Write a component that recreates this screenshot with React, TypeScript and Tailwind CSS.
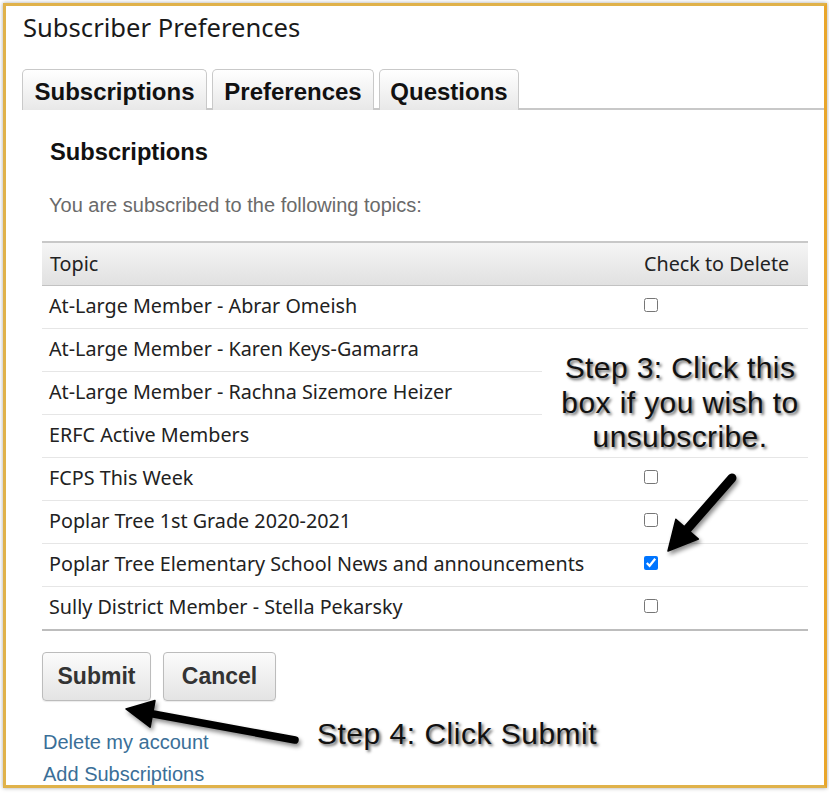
import React from 'react';

type Topic = { name: string; checked: boolean };

const topics: Topic[] = [
  { name: 'At-Large Member - Abrar Omeish', checked: false },
  { name: 'At-Large Member - Karen Keys-Gamarra', checked: false },
  { name: 'At-Large Member - Rachna Sizemore Heizer', checked: false },
  { name: 'ERFC Active Members', checked: false },
  { name: 'FCPS This Week', checked: false },
  { name: 'Poplar Tree 1st Grade 2020-2021', checked: false },
  { name: 'Poplar Tree Elementary School News and announcements', checked: true },
  { name: 'Sully District Member - Stella Pekarsky', checked: false },
];

const tabs = [
  { label: 'Subscriptions', w: 'w-[185px]' },
  { label: 'Preferences', w: 'w-[162px]' },
  { label: 'Questions', w: 'w-[140px]' },
];

// callout arrow: shaft + triangular head, coords in page space
const Arrow: React.FC<{ tail: [number, number]; tip: [number, number]; stroke: number; head: number; half: number }> = ({ tail, tip, stroke, head, half }) => {
  const dx = tip[0] - tail[0];
  const dy = tip[1] - tail[1];
  const len = Math.hypot(dx, dy);
  const ux = dx / len;
  const uy = dy / len;
  const bx = tip[0] - ux * head;
  const by = tip[1] - uy * head;
  const px = -uy * half;
  const py = ux * half;
  const pts = `${tip[0]},${tip[1]} ${bx + px},${by + py} ${bx - px},${by - py}`;
  return (
    <g>
      <line x1={tail[0]} y1={tail[1]} x2={bx + ux * 2} y2={by + uy * 2} stroke="#000" strokeWidth={stroke} strokeLinecap="round" />
      <polygon points={pts} fill="#000" stroke="#000" strokeWidth={1.5} strokeLinejoin="round" />
    </g>
  );
};

const App: React.FC = () => {
  return (
    <div className="relative w-[829px] h-[795px] bg-white overflow-hidden">
      <div className="ml-[3px] mt-[3px] w-[824px] h-[785px] border-[3px] border-[#e0b24a] border-r-[#e9a62b] shadow-[0_0_4px_rgba(0,0,0,0.35)] overflow-hidden bg-white">
        <h1 className="pl-[17px] pt-[7px] text-[25.6px] leading-[30px] text-[#1a1a1a] font-['Noto_Sans','Open_Sans',sans-serif]">
          Subscriber Preferences
        </h1>

        {/* Tabs */}
        <div className="ml-[16px] mt-[26px] h-[41px] flex items-end gap-[5px] border-b-2 border-[#c8c8c8]">
          {tabs.map(t => (
            <div
              key={t.label}
              className={`${t.w} -mb-[2px] h-[41px] pt-[2px] text-center leading-[39px] text-[24px] font-bold text-[#111] font-['Liberation_Sans',Arial,sans-serif] rounded-t-[5px] border border-b-0 border-[#c9c9c9] bg-gradient-to-b from-white to-[#e8e8e8]`}
            >
              {t.label}
            </div>
          ))}
        </div>

        {/* Panel */}
        <div className="pl-[36px] pr-[16px] font-['Liberation_Sans',Arial,sans-serif]">
          <h2 className="mt-[28px] pl-[8px] text-[23.7px] leading-[28px] font-bold text-[#111]">Subscriptions</h2>
          <p className="mt-[27px] pl-[7px] text-[20px] leading-[24px] text-[#6a6a6a]">You are subscribed to the following topics:</p>

          <div className="relative mt-[24px] w-[766px] font-['Noto_Sans','Open_Sans',sans-serif] text-[#222] text-[19.75px]">
            <div className="flex h-[45px] border-t-2 border-b border-t-[#c8c8c8] border-b-[#c2c2c2] bg-gradient-to-b from-[#f5f5f5] to-[#e1e1e1] leading-[42px]">
              <div className="flex-1 pl-[8px] pb-[3px]">Topic</div>
              <div className="w-[172px] pl-[8px] pb-[3px]">Check to Delete</div>
            </div>
            {topics.map((t, i) => {
              const last = i === topics.length - 1;
              return (
                <div
                  key={t.name}
                  className={last ? 'flex items-center h-[44px] border-b-2 border-[#bdbdbd]' : 'flex items-center h-[43px] border-b border-[#e6e6e6]'}
                >
                  <div className="flex-1 pl-[7px] pb-[2px] leading-[40px]">{t.name}</div>
                  <div className="w-[172px] pl-[8px] flex items-center">
                    <input type="checkbox" defaultChecked={t.checked} className="m-0 mb-[4px] w-[14px] h-[14px]" />
                  </div>
                </div>
              );
            })}

            {/* Step 3 callout */}
            <div className="absolute left-[500px] top-[91px] w-[276px] h-[124px] bg-white pt-[19px] text-center text-[30px] tracking-[0.4px] leading-[34.5px] text-[#111] font-['Liberation_Sans',Arial,sans-serif] [text-shadow:2px_2px_3px_rgba(0,0,0,0.6)]">
              Step 3: Click this
              <br />
              box if you wish to
              <br />
              unsubscribe.
            </div>
          </div>

          <div className="mt-[21px] flex gap-[12px]">
            <button className="w-[109px] h-[49px] rounded-[4px] border border-[#bcbcbc] bg-gradient-to-b from-[#fbfbfb] to-[#e4e4e4] text-[23px] font-bold text-[#333] shadow-[0_1px_1px_rgba(0,0,0,0.08)]">
              Submit
            </button>
            <button className="w-[113px] h-[49px] rounded-[4px] border border-[#bcbcbc] bg-gradient-to-b from-[#fbfbfb] to-[#e4e4e4] text-[23px] font-bold text-[#333] shadow-[0_1px_1px_rgba(0,0,0,0.08)]">
              Cancel
            </button>
          </div>

          <div className="mt-[25px] pl-[1px] text-[20px] leading-[32px] text-[#3a6f98]">
            <div>Delete my account</div>
            <div>Add Subscriptions</div>
          </div>
        </div>
      </div>

      {/* Step 4 callout */}
      <div className="absolute left-[317px] top-[717px] text-[30px] tracking-[0.5px] leading-[34px] text-[#111] font-['Liberation_Sans',Arial,sans-serif] [text-shadow:2px_2px_3px_rgba(0,0,0,0.6)]">
        Step 4: Click Submit
      </div>

      <svg className="absolute left-0 top-0 pointer-events-none drop-shadow-[2px_3px_2px_rgba(0,0,0,0.45)]" width={829} height={795}>
        <Arrow tail={[732, 478]} tip={[668, 551]} stroke={9} head={29} half={15} />
        <Arrow tail={[295, 740]} tip={[126, 709]} stroke={7.5} head={27} half={13.5} />
      </svg>
    </div>
  );
};

export default App;
